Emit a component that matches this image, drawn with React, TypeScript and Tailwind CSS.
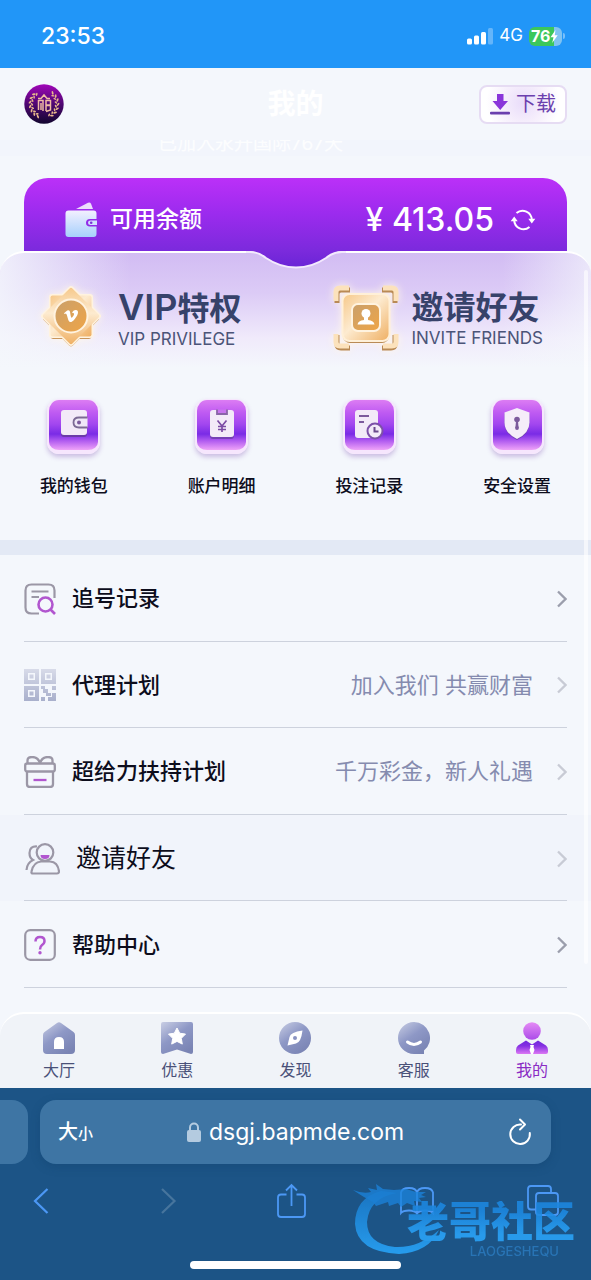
import type { ReactNode } from 'react';
import { FaVimeoV } from 'react-icons/fa';

const SHORTCUTS: { label: string; icon: ReactNode }[] = [
  { label: '我的钱包', icon: <WalletGlyph /> },
  { label: '账户明细', icon: <BillGlyph /> },
  { label: '投注记录', icon: <BetGlyph /> },
  { label: '安全设置', icon: <ShieldGlyph /> },
];

const ROWS: { label: string; icon: ReactNode; note?: string; strong?: boolean; large?: boolean }[] = [
  { label: '追号记录', icon: <TrackIcon />, strong: true },
  { label: '代理计划', icon: <QrIcon />, note: '加入我们 共赢财富' },
  { label: '超给力扶持计划', icon: <GiftIcon />, note: '千万彩金，新人礼遇' },
  { label: '邀请好友', icon: <FriendsIcon />, large: true },
  { label: '帮助中心', icon: <HelpIcon />, strong: true },
];

const TABS: { label: string; icon: ReactNode; active?: boolean }[] = [
  { label: '大厅', icon: <HomeTab /> },
  { label: '优惠', icon: <OfferTab /> },
  { label: '发现', icon: <DiscoverTab /> },
  { label: '客服', icon: <ServiceTab /> },
  { label: '我的', icon: <MineTab />, active: true },
];

export default function App() {
  return (
    <div className="flex min-h-screen w-full flex-col bg-[#f4f7fc] font-['Inter','Noto_Sans_CJK_SC',sans-serif] text-[#0d0d1c]">
      <StatusBar />
      <Header />
      <main className="relative flex-1 pb-6">
        <div className="flex h-4 items-end justify-center overflow-hidden bg-[#f2f5fc] pr-[90px]">
          <p className="text-[19px] leading-6 whitespace-nowrap text-white/80">已加入永升国际767天</p>
        </div>
        <Balance />
        <section className="relative rounded-t-3xl border-t-2 border-white bg-[linear-gradient(90deg,#f4f7fcd9_0%,#f4f7fc00_22%,#f4f7fc00_85%,#f4f7fcb3_100%),linear-gradient(180deg,#d2bcf3_0px,#dccbf6_40px,#f0eafb_85px,#f4f7fc_115px)] pb-[42px]">
          <Notch />
          <div className="grid grid-cols-2 pt-[26px] pr-1">
            <Promo
              icon={<VipBadge />}
              title={
                <>
                  <span className="text-[36px] font-semibold">VIP</span>特权
                </>
              }
              sub="VIP PRIVILEGE"
            />
            <Promo icon={<InviteBadge />} title="邀请好友" sub="INVITE FRIENDS" />
          </div>
          <nav className="mt-[42px] grid grid-cols-4">
            {SHORTCUTS.map((s) => (
              <a key={s.label} href="#" className="flex flex-col items-center gap-5">
                <span className="flex h-[55px] w-[53px] items-start justify-center rounded-xl border-2 border-t border-b-4 border-[#f6e6fd] bg-[linear-gradient(180deg,#dc7cf3_0%,#bf5bf2_25%,#a347ef_48%,#7a2be6_68%,#b25df0_82%,#efa3f8_100%)] pt-1 shadow-[0_3px_5px_#7b4bb055]">
                  {s.icon}
                </span>
                <span className="text-[17px] leading-6 font-medium">{s.label}</span>
              </a>
            ))}
          </nav>
        </section>
        <div className="h-[15px] bg-[#e3e9f5]" />
        <ul className="grid h-[433px] grid-rows-5">
          {ROWS.map((r) => (
            <li key={r.label} className={r.large ? 'bg-[#f1f4fb]' : ''}>
              <a href="#" className="mx-6 flex h-full items-center gap-4 border-b border-[#cdd2dd] pt-0.5">
                {r.icon}
                <span className={r.large ? 'text-[25px]' : 'text-[22px] font-medium'}>{r.label}</span>
                <span className="ml-auto text-[22px] text-[#858baf]">{r.note}</span>
                <svg
                  viewBox="0 0 10 18"
                  className={r.strong ? 'ml-2 h-[18px] w-[10px] text-[#9b9eac]' : 'ml-2 h-[18px] w-[10px] text-[#c8cbd5]'}
                  fill="none"
                  stroke="currentColor"
                  strokeWidth="2.300"
                >
                  <path d="M1 1.500l7.500 7.500L1 16.500" />
                </svg>
              </a>
            </li>
          ))}
        </ul>
        {/* page scroll thumb */}
        <div className="absolute top-[130px] right-[3px] bottom-12 w-1 rounded-full bg-white/60" />
      </main>
      <nav className="grid grid-cols-5 rounded-t-3xl border-t-2 border-white bg-[#f0f3f8] pt-2 pb-1.5">
        {TABS.map((t) => (
          <a key={t.label} href="#" className="flex flex-col items-center gap-1">
            {t.icon}
            <span className={t.active ? 'text-[16px] leading-6 text-[#8a2bc4]' : 'text-[16px] leading-6 text-[#4a5178]'}>
              {t.label}
            </span>
          </a>
        ))}
      </nav>
      <BrowserBar />
    </div>
  );
}

function StatusBar() {
  return (
    <div className="flex h-[68px] items-center justify-between bg-[#2196f8] pt-1 pr-[26px] pl-[41px] text-white">
      <span className="text-[23px] font-medium">23:53</span>
      <div className="flex items-center gap-1.5">
        <svg viewBox="0 0 26 17" className="h-[17px] w-[26px]" fill="currentColor">
          <rect x="0" y="10.500" width="5" height="6" rx="1.500" />
          <rect x="7" y="7.500" width="5" height="9" rx="1.500" />
          <rect x="14" y="4" width="5" height="12.500" rx="1.500" />
          <rect x="21" y="0" width="5" height="16.500" rx="1.500" opacity=".3" />
        </svg>
        <span className="text-[17px]">4G</span>
        <div className="relative flex items-center">
          <span className="flex h-[19px] w-[33px] items-center rounded-md bg-[linear-gradient(90deg,#3cc75c_75%,#7fc3f2_75%)] pl-0.5 text-[16px] font-bold">
            76
            <svg viewBox="0 0 8 13" className="h-[13px] w-2" fill="currentColor">
              <path d="M5.500 0L.5 7.200h3L2.200 13 7.700 5.200h-3z" />
            </svg>
          </span>
          <span className="ml-px h-1.5 w-0.5 rounded-r bg-white/40" />
        </div>
      </div>
    </div>
  );
}

function Header() {
  return (
    <header className="grid h-[72px] grid-cols-[1fr_auto_1fr] items-center px-6">
      <Logo />
      <h1 className="text-[28px] font-bold text-white">我的</h1>
      <button
        type="button"
        className="flex h-[39px] w-[88px] items-center justify-center gap-1.5 justify-self-end rounded-lg border-2 border-[#e6dcf3] bg-[radial-gradient(circle_at_50%_45%,#e9dcfa_0%,#f6effc_45%,#ffffff_80%)] text-[20px] text-[#6b3fae]"
      >
        <svg viewBox="0 0 20 22" className="h-[22px] w-5">
          <path d="M7 1h6.500v7H18l-7.800 9L2.500 8H7z" fill="#8a35da" />
          <rect x="0" y="18.800" width="20" height="2.600" rx="1" fill="#6b3fae" />
        </svg>
        下载
      </button>
    </header>
  );
}

function Logo() {
  const leaves = [-150, -132, -114, -96, -78, -60, -42, 42, 60, 78, 96, 114, 132, 150];
  return (
    <svg viewBox="0 0 40 40" className="h-10 w-10">
      <defs>
        <linearGradient id="logo-bg" x1="0" y1="0" x2="0" y2="1">
          <stop offset="0" stopColor="#a006b8" />
          <stop offset=".5" stopColor="#4f0772" />
          <stop offset="1" stopColor="#12062f" />
        </linearGradient>
      </defs>
      <circle cx="20" cy="20" r="19.700" fill="url(#logo-bg)" />
      {leaves.map((a) => (
        <g key={a} transform={`rotate(${a} 20 20)`} fill="#e8b98c">
          <ellipse cx="19" cy="6" rx="1.900" ry=".9" transform="rotate(35 19 6)" />
          <ellipse cx="21" cy="8" rx="1.600" ry=".8" transform="rotate(-35 21 8)" />
        </g>
      ))}
      <path
        d="M14.500 16v10M14.500 16.500H19V27M17 19v7M22 27V16.500h4.500V21H22M22 21.500h4.500V26L22 27.500M14 14.500h3l3-3.500 3 3.500h3"
        fill="none"
        stroke="#f0bca4"
        strokeWidth="1.500"
      />
    </svg>
  );
}

function Balance() {
  return (
    <section className="mx-6 mt-[22px] flex h-[73px] items-center rounded-t-3xl bg-[linear-gradient(180deg,#bb30f8_0px,#9c2bee_35px,#7b2adc_73px)] pt-2.5 pr-[31px] pl-[41px] text-white">
      <svg viewBox="0 0 33 36" className="h-9 w-[33px]">
        <defs>
          <linearGradient id="purse" x1="0" y1="0" x2="0" y2="1">
            <stop offset="0" stopColor="#f3f0ff" />
            <stop offset="1" stopColor="#a6d0fc" />
          </linearGradient>
        </defs>
        <path d="M11 7L23 .8q2-1 3 1l2 5.200z" fill="#ecdcfc" />
        <path
          d="M3.500 8.500h25q3 0 3 3V17H25q-4 0-4 3.800t4 3.800h6.500V32q0 3-3 3h-25q-3 0-3-3V11.500q0-3 3-3z"
          fill="url(#purse)"
        />
        <path d="M32 18.500h-6.500q-2.500 0-2.500 2.300t2.500 2.300H32z" fill="#cfe2fd" />
        <circle cx="26.200" cy="20.800" r="1.300" fill="#7a35d8" />
      </svg>
      <span className="ml-3 text-[23px] font-medium">可用余额</span>
      <span className="ml-auto text-[32px] font-medium">¥ 413.05</span>
      <button type="button" aria-label="刷新余额" className="ml-4">
        <svg viewBox="0 0 26 24" className="h-6 w-[26px]" fill="none" stroke="currentColor" strokeWidth="2">
          <path d="M6.500 5A9.300 9.300 0 0 1 21.800 12M19.500 19A9.300 9.300 0 0 1 4.200 12" />
          <path d="M18.300 10.800h7L21.800 15.500z M.7 13.200h7L4.200 8.500z" fill="currentColor" stroke="none" />
        </svg>
      </button>
    </section>
  );
}

// lower lip of the balance card hanging over the panel
function Notch() {
  return (
    <svg viewBox="0 0 100 20" className="absolute -top-0.5 left-1/2 h-5 w-[100px] -translate-x-1/2">
      <defs>
        <linearGradient id="notch" x1="0" y1="0" x2="0" y2="1">
          <stop offset="0" stopColor="#7b2adc" />
          <stop offset="1" stopColor="#6a24d6" />
        </linearGradient>
      </defs>
      <path d="M4 0Q13 1 20 7Q34 16.500 50 16.500T80 7Q87 1 96 0z" fill="url(#notch)" />
      <path d="M0 1H4Q13 1 20 7Q34 16.500 50 16.500T80 7Q87 1 96 1H100" fill="none" stroke="#f3eafd" strokeWidth="2" />
    </svg>
  );
}

function Promo({ icon, title, sub }: { icon: ReactNode; title: ReactNode; sub: string }) {
  return (
    <a href="#" className="flex items-center gap-3 pl-8 text-[#37426a]">
      {icon}
      <span className="flex flex-col">
        <span className="text-[32px] leading-10 font-bold whitespace-nowrap">{title}</span>
        <span className="text-[17px] leading-5 whitespace-nowrap text-[#4b5478]">{sub}</span>
      </span>
    </a>
  );
}

function GoldDefs() {
  return (
    <defs>
      <linearGradient id="gold" x1="0" y1="0" x2="1" y2="1">
        <stop offset="0" stopColor="#f6c88a" />
        <stop offset=".45" stopColor="#fdebd0" />
        <stop offset="1" stopColor="#efaf62" />
      </linearGradient>
      <linearGradient id="gold-deep" x1="0" y1="0" x2="1" y2="1">
        <stop offset="0" stopColor="#c9a06c" />
        <stop offset="1" stopColor="#f0a546" />
      </linearGradient>
    </defs>
  );
}

function VipBadge() {
  return (
    <svg viewBox="0 0 74 78" className="h-[78px] w-[74px] shrink-0 drop-shadow-[0_0_4px_#fff6e8]">
      <GoldDefs />
      <g fill="#c9965c">
        <rect x="18.500" y="19" width="41" height="41" rx="3" />
        <rect x="18.500" y="19" width="41" height="41" rx="3" transform="rotate(45 39 39.500)" />
      </g>
      <g fill="#fff3df">
        <rect x="17" y="15" width="44" height="44" rx="3" />
        <rect x="17" y="15" width="44" height="44" rx="3" transform="rotate(45 39 37)" />
      </g>
      <g fill="url(#gold)">
        <rect x="18.500" y="16.500" width="41" height="41" rx="2" />
        <rect x="18.500" y="16.500" width="41" height="41" rx="2" transform="rotate(45 39 37)" />
      </g>
      <circle cx="39" cy="37" r="16.500" fill="url(#gold-deep)" stroke="#fff3e0" strokeWidth="2" />
      <FaVimeoV x="31" y="29" width="17" height="17" color="#ffffff" />
    </svg>
  );
}

function InviteBadge() {
  return (
    <svg viewBox="0 0 74 78" className="h-[78px] w-[74px] shrink-0 drop-shadow-[0_0_4px_#fff6e8]">
      <GoldDefs />
      <g fill="none" stroke="#b98a55" strokeWidth="5">
        <path d="M11 24V15q0-4 4-4h9M56 11h9q4 0 4 4v9M69 56v9q0 4-4 4h-9M24 69h-9q-4 0-4-4v-9" />
      </g>
      <g fill="none" stroke="#fce2bc" strokeWidth="5">
        <path d="M10 22V13q0-4 4-4h9M57 9h9q4 0 4 4v9M70 55v8q0 4-4 4h-9M23 67h-9q-4 0-4-4v-8" />
      </g>
      <rect x="17" y="18" width="46" height="46" rx="7" fill="#b98a55" />
      <rect x="16.500" y="15" width="47" height="47" rx="7" fill="url(#gold)" stroke="#fff0d8" strokeWidth="2" />
      <rect x="26" y="25" width="28" height="27" rx="6" fill="url(#gold-deep)" stroke="#fff3e0" strokeWidth="2" />
      <circle cx="40" cy="34.500" r="4.500" fill="#fff" />
      <path d="M38 37h4v4q6 .5 6.500 4.500h-17q.5-4 6.500-4.500z" fill="#fff" />
    </svg>
  );
}

function WalletGlyph() {
  return (
    <svg viewBox="0 0 40 40" className="h-10 w-10">
      <rect x="7" y="8" width="26" height="25" rx="3" fill="#6c3ba8" />
      <rect x="7" y="6" width="26" height="25" rx="3" fill="#f3eaf8" />
      <path d="M33.500 13.500H25q-5.500 0-5.500 5t5.500 5h8.500" fill="#efe7f7" stroke="#7c6a94" strokeWidth="1.800" />
      <circle cx="25" cy="18.500" r="2" fill="#7c5a9c" />
    </svg>
  );
}

function BillGlyph() {
  return (
    <svg viewBox="0 0 40 40" className="h-10 w-10" fill="none">
      <rect x="8" y="8" width="24" height="27" rx="3" fill="#7540b4" />
      <rect x="8" y="6" width="24" height="27" rx="3" fill="#f3eaf8" />
      <path d="M15 5.500V10h10V5.500" fill="#c974ef" stroke="#8a64a8" strokeWidth="1.800" />
      <path d="M15.500 16.500l4.500 5.500 4.500-5.500M20 22v6M16 22.500h8M16 25.500h8" stroke="#7c4ba4" strokeWidth="1.700" />
    </svg>
  );
}

function BetGlyph() {
  return (
    <svg viewBox="0 0 40 40" className="h-10 w-10" fill="none">
      <rect x="6" y="6" width="23" height="28" rx="3" fill="#f3eaf8" />
      <path d="M10 12h10M10 18h5" stroke="#7c5a9c" strokeWidth="2" />
      <circle cx="26" cy="27" r="7.500" fill="#f3eaf8" stroke="#7d51a8" strokeWidth="2" />
      <path d="M25.500 23v4.500h4" stroke="#6b4a8c" strokeWidth="2" />
    </svg>
  );
}

function ShieldGlyph() {
  return (
    <svg viewBox="0 0 40 40" className="h-10 w-10">
      <path d="M20 5l12.500 4.500v10Q32.500 30 20 36 7.500 30 7.500 19.500v-10z" fill="#7540b4" />
      <path d="M20 4l12.500 4.500v10Q32.500 29 20 35 7.500 29 7.500 18.500v-10z" fill="#f5edf9" />
      <circle cx="20" cy="15.500" r="2.800" fill="#7c5a9c" />
      <path d="M19 17h2l.6 7h-3.200z" fill="#7c5a9c" />
      <circle cx="20" cy="24" r="1.900" fill="#7c5a9c" />
    </svg>
  );
}

function TrackIcon() {
  return (
    <svg viewBox="0 0 32 32" className="h-8 w-8" fill="none" stroke="#9b97a6" strokeWidth="2.200">
      <path d="M30.500 15V7.500q0-6-6-6h-17q-6 0-6 6v17q0 6 6 6H15" />
      <path d="M7.500 8.500h17M7.500 14h7.500" />
      <circle cx="21.500" cy="21.500" r="7" stroke="#b156cf" strokeWidth="2.600" />
      <path d="M26.500 26.500l4.500 4.500" stroke="#b156cf" strokeWidth="2.600" />
    </svg>
  );
}

function QrIcon() {
  return (
    <svg viewBox="0 0 32 32" className="h-8 w-8">
      <defs>
        <linearGradient id="qr" gradientUnits="userSpaceOnUse" x1="0" y1="0" x2="0" y2="32">
          <stop offset="0" stopColor="#d8dbe9" />
          <stop offset=".5" stopColor="#c0c5da" />
          <stop offset="1" stopColor="#a9b0cc" />
        </linearGradient>
      </defs>
      <g fill="none" stroke="url(#qr)" strokeWidth="4">
        <path d="M2 2h11v11H2zM19 2h11v11H19zM2 19h11v11H2z" />
      </g>
      <path
        d="M5.500 5.500h4v4h-4zM22.500 5.500h4v4h-4zM5.500 22.500h4v4h-4zM17 17h4v3h3v4h3v3h-5v-3h-3v-4h-2zM28 17h4v4h-4zM17 28h4v4h-4zM24 28h4v-4h4v8h-8z"
        fill="url(#qr)"
      />
    </svg>
  );
}

function GiftIcon() {
  return (
    <svg viewBox="0 0 32 32" className="h-8 w-8" fill="none" stroke="#9b97a6" strokeWidth="2.300">
      <rect x="1.200" y="7.500" width="29.600" height="8" rx="2" />
      <path d="M3 15.500V28q0 3 3 3h20q3 0 3-3V15.500" />
      <path d="M16 7Q14 1 8 1 3.500 1 3.500 4.500V7M16 7q2-6 8-6 4.500 0 4.500 3.500V7" />
      <path d="M9.500 24h13" stroke="#b156cf" />
    </svg>
  );
}

function FriendsIcon() {
  return (
    <svg viewBox="0 0 36 32" className="h-8 w-9" fill="none" stroke="#9b97a6" strokeWidth="2.200">
      <path d="M17 18.500h9q8 .5 9 10 0 2-2 2H9q-2 0-1.500-2 2-9.500 9.500-10z" />
      <circle cx="21" cy="9.500" r="8.300" />
      <path d="M13 3.500Q5.500 3 5.500 10q0 5 3.500 7-6 3-6.500 10" />
      <path d="M16.500 12h9q0 4-4.500 4t-4.500-4z" fill="#b156cf" stroke="none" />
    </svg>
  );
}

function HelpIcon() {
  return (
    <svg viewBox="0 0 32 32" className="h-8 w-8" fill="none" stroke="#9b97a6" strokeWidth="2.200">
      <rect x="1.200" y="1.200" width="29.600" height="29.600" rx="5" />
      <path d="M11.500 12.500q0-4.500 4.500-4.500t4.500 4q0 2.500-2.500 4-2 1.500-2 4.500" stroke="#b156cf" strokeWidth="2.500" />
      <circle cx="16" cy="23.800" r="1.700" fill="#b156cf" stroke="none" />
    </svg>
  );
}

function TabDefs() {
  return (
    <defs>
      <linearGradient id="tab" x1="0" y1="0" x2=".7" y2="1">
        <stop offset="0" stopColor="#c9cee4" />
        <stop offset=".5" stopColor="#8e98c6" />
        <stop offset="1" stopColor="#7a84b4" />
      </linearGradient>
    </defs>
  );
}

function HomeTab() {
  return (
    <svg viewBox="0 0 32 32" className="h-8 w-8">
      <TabDefs />
      <path d="M14 1q2-1.500 4 0l12.500 9Q32 11 32 13v15q0 4-4 4H4q-4 0-4-4V13q0-2 1.500-3z" fill="url(#tab)" />
      <path d="M11 27v-7q0-5 5-5t5 5v7z" fill="#fff" />
    </svg>
  );
}

function OfferTab() {
  return (
    <svg viewBox="0 0 32 32" className="h-8 w-8">
      <TabDefs />
      <path d="M2 0h28q2 0 2 2v28q0 2-2 2l-14-4.500L2 32q-2 0-2-2V2q0-2 2-2z" fill="url(#tab)" />
      <path
        d="M16 6l2.700 5.200 5.800.9-4.200 4.200 1 5.800L16 19.400l-5.300 2.700 1-5.800-4.200-4.200 5.800-.9z"
        fill="#fff"
        stroke="#fff"
        strokeLinejoin="round"
      />
    </svg>
  );
}

function DiscoverTab() {
  return (
    <svg viewBox="0 0 32 32" className="h-8 w-8">
      <TabDefs />
      <circle cx="16" cy="16" r="16" fill="url(#tab)" />
      <path d="M23.500 8.500q-12 1.500-13 6.500L8.500 23.500 17 21.500q5-1 6.500-13z" fill="#fff" />
      <circle cx="16" cy="16" r="2" fill="#8993c2" />
    </svg>
  );
}

function ServiceTab() {
  return (
    <svg viewBox="0 0 32 32" className="h-8 w-8">
      <TabDefs />
      <path d="M16 0a16 16 0 0 1 10 28.500V32H16A16 16 0 0 1 16 0z" fill="url(#tab)" />
      <path d="M9.500 20q6.500 5 13 0" fill="none" stroke="#fff" strokeWidth="3" strokeLinecap="round" />
    </svg>
  );
}

function MineTab() {
  return (
    <svg viewBox="0 0 32 32" className="h-8 w-8">
      <defs>
        <linearGradient id="mine-head" x1="0" y1="0" x2="0" y2="1">
          <stop offset="0" stopColor="#e58bf5" />
          <stop offset="1" stopColor="#ab4be8" />
        </linearGradient>
        <linearGradient id="mine-body" x1="0" y1="0" x2="0" y2="1">
          <stop offset="0" stopColor="#6f28dc" />
          <stop offset=".4" stopColor="#8530e2" />
          <stop offset="1" stopColor="#dc78f4" />
        </linearGradient>
      </defs>
      <circle cx="16" cy="9" r="8.800" fill="url(#mine-head)" />
      <path d="M10 18.500l6 4 6-4 8 5q2 1.500 2 4.500v2q0 2-2 2H2q-2 0-2-2v-2q0-3 2-4.500z" fill="url(#mine-body)" />
      <path d="M14 23h4l-.5 2 1 3-1.500 4h-2l-1.500-4 1-3z" fill="#fff" />
    </svg>
  );
}

function BrowserBar() {
  return (
    <footer className="relative flex flex-col bg-[#1c5486] pt-3 pb-[11px] text-white">
      <div className="flex h-16 gap-3 pr-10">
        <div className="w-7 rounded-r-2xl bg-[#3e75a4]" />
        <div className="grid flex-1 grid-cols-[1fr_auto_1fr] items-center rounded-2xl bg-[#3e75a4] px-[18px] shadow-[0_3px_10px_#0f3f6855]">
          <button type="button" className="justify-self-start text-[20px] font-medium">
            大<span className="text-[15px]">小</span>
          </button>
          <button type="button" className="flex items-center gap-2 text-[23px]">
            <svg viewBox="0 0 14 20" className="h-5 w-3.5 text-[#b4cbe0]">
              <rect x="0" y="8" width="14" height="12" rx="2" fill="currentColor" />
              <path d="M3 9V5.500a4 4 0 0 1 8 0V9" fill="none" stroke="currentColor" strokeWidth="2" />
            </svg>
            dsgj.bapmde.com
          </button>
          <button type="button" aria-label="重新载入" className="justify-self-end">
            <svg viewBox="0 0 26 28" className="h-7 w-[26px]" fill="none" stroke="currentColor" strokeWidth="2" strokeLinecap="round">
              <path d="M14 6.500A9.800 9.800 0 1 0 22.800 15" />
              <path d="M13 1.500l5 5-5 5" strokeLinejoin="round" />
            </svg>
          </button>
        </div>
      </div>
      <div className="flex h-[73px] items-center justify-between pr-8 pl-[25px] text-[#4c98f5]">
        <button type="button" aria-label="后退">
          <svg viewBox="0 0 32 28" className="h-7 w-8" fill="none" stroke="currentColor" strokeWidth="2.200">
            <path d="M22.500 2L10 14l12.500 12" />
          </svg>
        </button>
        <button type="button" aria-label="前进" disabled className="text-[#47759d]">
          <svg viewBox="0 0 32 28" className="h-7 w-8" fill="none" stroke="currentColor" strokeWidth="2.200">
            <path d="M12 2l12.500 12L12 26" />
          </svg>
        </button>
        <button type="button" aria-label="分享">
          <svg viewBox="0 0 32 36" className="h-9 w-8" fill="none" stroke="currentColor" strokeWidth="1.800">
            <path d="M11.500 11.500H6q-3 0-3 3V31q0 3 3 3h21q3 0 3-3V14.500q0-3-3-3h-5.500" />
            <path d="M16.500 23V2M11 7.500L16.500 2 22 7.500" />
          </svg>
        </button>
        <button type="button" aria-label="书签">
          <svg viewBox="0 0 34 30" className="h-[30px] w-[34px]" fill="none" stroke="currentColor" strokeWidth="1.800">
            <path d="M17 6.500Q16 2 9 2T1 6.500V27q2-2.500 8-2.500t8 3q2-3 8-3t8 2.500V6.500Q32 2 25 2t-8 4.500zM17 6.500v21" />
          </svg>
        </button>
        <button type="button" aria-label="标签页">
          <svg viewBox="0 0 32 32" className="h-8 w-8" fill="none" stroke="currentColor" strokeWidth="1.800">
            <path d="M9 24.500H4q-3 0-3-3V4q0-3 3-3h17q3 0 3 3v4" />
            <rect x="9" y="8" width="22" height="22" rx="3" />
          </svg>
        </button>
      </div>
      <div className="mt-6 h-2 w-[211px] self-center rounded-full bg-white" />
      <Watermark />
    </footer>
  );
}

function Watermark() {
  return (
    <div className="pointer-events-none absolute right-4 bottom-5 h-[76px] w-[222px] opacity-90">
      <svg viewBox="0 0 110 76" className="absolute top-0 left-0 h-[76px] w-[110px]">
        <defs>
          <linearGradient id="dragon" x1="0" y1="0" x2="0" y2="1">
            <stop offset="0" stopColor="#1a78c8" />
            <stop offset="1" stopColor="#28a4f8" />
          </linearGradient>
        </defs>
        <path
          d="M44 9Q16 14 14 38 14 60 42 63 66 64 86 46 76 68 46 70 4 68 2 40 2 14 28 7z"
          fill="url(#dragon)"
        />
        <path
          d="M0 6q10 4 18 2l-3-4 9 2-1-6 7 5 11 1 12-1 10 3 10 0-5 3 5 2-7 1 3 4-8-1 1 5-8-3-6 4-3-4-9 3-1-4-12 4-3-4Q12 14 0 6z"
          fill="#1b84dc"
          opacity=".85"
        />
      </svg>
      <div className="absolute top-[17px] right-0 flex flex-col items-end">
        <span className="bg-[linear-gradient(180deg,#1c86de_20%,#2aa2f6_80%)] bg-clip-text text-[42px] leading-[42px] font-black whitespace-nowrap text-transparent">
          老哥社区
        </span>
        <span className="pr-4 text-[13px] leading-4 font-medium text-[#2a78bb]">LAOGESHEQU</span>
      </div>
    </div>
  );
}
